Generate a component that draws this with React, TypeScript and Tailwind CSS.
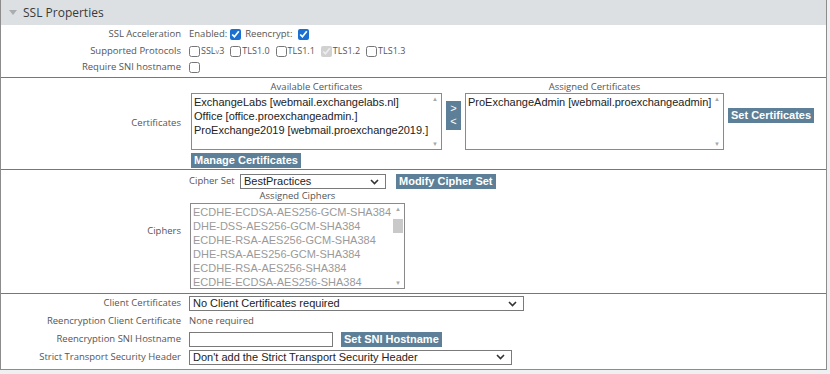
import React from 'react';

const labelFont = { fontFamily: '"Open Sans", "DejaVu Sans", sans-serif' };

const Btn: React.FC<{ children: React.ReactNode; className?: string }> = ({ children, className = '' }) => (
  <button
    className={`block bg-[#5d7f97] text-white font-bold text-[11px] leading-none px-[3px] h-[15px] font-['Liberation_Sans',Arial,sans-serif] ${className}`}
  >
    {children}
  </button>
);

const Check: React.FC<{ checked?: boolean; disabled?: boolean }> = ({ checked, disabled }) => (
  <input
    type="checkbox"
    defaultChecked={checked}
    disabled={disabled}
    className="m-0 w-[11px] h-[11px] accent-[#1b6fd1]"
  />
);

const Scrollbar: React.FC<{ thumb?: boolean }> = ({ thumb }) => (
  <div className="w-[12px] shrink-0 flex flex-col items-center text-[#a8a8a8] text-[6px] leading-none">
    <span className="h-[10px] flex items-center">▲</span>
    <div className="flex-1 w-full">{thumb && <div className="mt-[5px] mx-[1px] h-[14px] bg-[#c9c9c9]" />}</div>
    <span className="h-[10px] flex items-center">▼</span>
  </div>
);

const ListBox: React.FC<{ items: string[]; className?: string; disabled?: boolean; thumb?: boolean }> = ({
  items,
  className = '',
  disabled,
  thumb,
}) => (
  <div className={`border border-[#8a8a8a] bg-white flex ${className}`}>
    <div
      className={`flex-1 pl-[2px] pt-[1px] text-[11px] leading-[14px] font-['Liberation_Sans',Arial,sans-serif] whitespace-nowrap overflow-hidden ${
        disabled ? 'text-[#9a9a9a]' : 'text-[#222]'
      }`}
    >
      {items.map((it) => (
        <div key={it}>{it}</div>
      ))}
    </div>
    <Scrollbar thumb={thumb} />
  </div>
);

const Select: React.FC<{ value: string; className?: string }> = ({ value, className = '' }) => (
  <div
    className={`border border-[#7a7a7a] bg-white h-[15px] flex items-center justify-between pl-[3px] pr-[6px] text-[11px] text-[#222] font-['Liberation_Sans',Arial,sans-serif] ${className}`}
  >
    <span className="leading-none">{value}</span>
    <svg width="9" height="6" viewBox="0 0 9 6">
      <path d="M1 1 L4.5 4.5 L8 1" stroke="#333" strokeWidth="1.6" fill="none" />
    </svg>
  </div>
);

const Label: React.FC<{ children: React.ReactNode }> = ({ children }) => (
  <div style={labelFont} className="w-[180px] shrink-0 text-right text-[9.5px] text-[#555]">
    {children}
  </div>
);

const Proto: React.FC<{ name: string; checked?: boolean; disabled?: boolean }> = ({ name, checked, disabled }) => (
  <span className="flex items-center mr-[6px]">
    <Check checked={checked} disabled={disabled} />
    <span style={labelFont} className="text-[9px] [font-variant:small-caps] text-[#555] ml-[1px]">
      {name}
    </span>
  </span>
);

const App: React.FC = () => {
  return (
    <div className="w-[830px] h-[374px] bg-[#eff0f1] overflow-hidden">
      <div className="w-[827px] border-l border-r border-b border-[#8c8c8c] bg-white">
        <div className="h-[25px] bg-[#dde0e2] flex items-center pl-[8px]">
          <svg width="8" height="5" viewBox="0 0 8 5" className="mr-[6px]">
            <path d="M0 0 L8 0 L4 5 Z" fill="#a9adb0" />
          </svg>
          <span style={labelFont} className="text-[12px] text-[#3a3a3a]">
            SSL Properties
          </span>
        </div>

        {/* general */}
        <div className="flex flex-col pt-[1px] pb-[1px]">
          <div className="flex items-center h-[17px]">
            <Label>SSL Acceleration</Label>
            <div style={labelFont} className="pl-[8px] flex items-center text-[9.5px] text-[#555]">
              <span>Enabled:</span>
              <span className="ml-[3px] mr-[4px] flex"><Check checked /></span>
              <span>Reencrypt:</span>
              <span className="ml-[5px] flex"><Check checked /></span>
            </div>
          </div>
          <div className="flex items-center h-[16px]">
            <Label>Supported Protocols</Label>
            <div className="pl-[8px] flex items-center">
              <Proto name="SSLv3" />
              <Proto name="TLS1.0" />
              <Proto name="TLS1.1" />
              <Proto name="TLS1.2" checked disabled />
              <Proto name="TLS1.3" />
            </div>
          </div>
          <div className="flex items-center h-[17px]">
            <Label>Require SNI hostname</Label>
            <div className="pl-[8px] flex items-center">
              <Check />
            </div>
          </div>
        </div>

        {/* certificates */}
        <div className="border-t border-[#777] flex items-center h-[92px]">
          <Label>Certificates</Label>
          <div className="pl-[10px] grid grid-cols-[251px_15px_259px_auto] gap-x-[4px] items-start">
            <div style={labelFont} className="text-center text-[9.5px] text-[#555] h-[13px] leading-[13px]">
              Available Certificates
            </div>
            <div />
            <div style={labelFont} className="text-center text-[9.5px] text-[#555] h-[13px] leading-[13px]">
              Assigned Certificates
            </div>
            <div />
            <ListBox
              className="h-[57px]"
              items={[
                'ExchangeLabs [webmail.exchangelabs.nl]',
                'Office [office.proexchangeadmin.]',
                'ProExchange2019 [webmail.proexchange2019.]',
              ]}
            />
            <div className="mt-[8px] bg-[#5d7f97] h-[29px] flex flex-col items-center justify-center text-white text-[11px] leading-[13px] font-['Liberation_Sans',Arial,sans-serif]">
              <span>&gt;</span>
              <span>&lt;</span>
            </div>
            <ListBox className="h-[57px]" items={['ProExchangeAdmin [webmail.proexchangeadmin]']} />
            <Btn className="self-start mt-[15px]">Set Certificates</Btn>
            <div className="flex pt-[3px]">
              <Btn className="h-[14px]">Manage Certificates</Btn>
            </div>
          </div>
        </div>

        {/* ciphers */}
        <div className="border-t border-[#777] flex h-[124px]">
          <div className="flex items-center">
            <Label>Ciphers</Label>
          </div>
          <div className="pl-[8px] pt-[4px] flex flex-col">
            <div className="flex items-center h-[15px]">
              <span style={labelFont} className="text-[9.5px] text-[#555] w-[51px]">
                Cipher Set
              </span>
              <Select value="BestPractices" className="w-[146px]" />
              <Btn className="ml-[10px]">Modify Cipher Set</Btn>
            </div>
            <div style={labelFont} className="w-[217px] text-center text-[9.5px] text-[#555] h-[14px] leading-[14px]">
              Assigned Ciphers
            </div>
            <ListBox
              disabled
              thumb
              className="w-[215px] h-[86px] ml-[1px] bg-[#fafafa]"
              items={[
                'ECDHE-ECDSA-AES256-GCM-SHA384',
                'DHE-DSS-AES256-GCM-SHA384',
                'ECDHE-RSA-AES256-GCM-SHA384',
                'DHE-RSA-AES256-GCM-SHA384',
                'ECDHE-RSA-AES256-SHA384',
                'ECDHE-ECDSA-AES256-SHA384',
              ]}
            />
          </div>
        </div>

        {/* client / reencryption */}
        <div className="border-t border-[#777] flex flex-col pt-[1px] pb-[3px]">
          <div className="flex items-center h-[17px]">
            <Label>Client Certificates</Label>
            <div className="pl-[8px]">
              <Select value="No Client Certificates required" className="w-[335px]" />
            </div>
          </div>
          <div className="flex items-center h-[18px]">
            <Label>Reencryption Client Certificate</Label>
            <div style={labelFont} className="pl-[8px] text-[9.5px] text-[#555]">
              None required
            </div>
          </div>
          <div className="flex items-center h-[18px]">
            <Label>Reencryption SNI Hostname</Label>
            <div className="pl-[8px] flex items-center">
              <div className="w-[144px] h-[15px] border border-[#7a7a7a] bg-white" />
              <Btn className="ml-[8px]">Set SNI Hostname</Btn>
            </div>
          </div>
          <div className="flex items-center h-[18px]">
            <Label>Strict Transport Security Header</Label>
            <div className="pl-[8px]">
              <Select value="Don't add the Strict Transport Security Header" className="w-[323px]" />
            </div>
          </div>
        </div>
      </div>
    </div>
  );
};

export default App;
